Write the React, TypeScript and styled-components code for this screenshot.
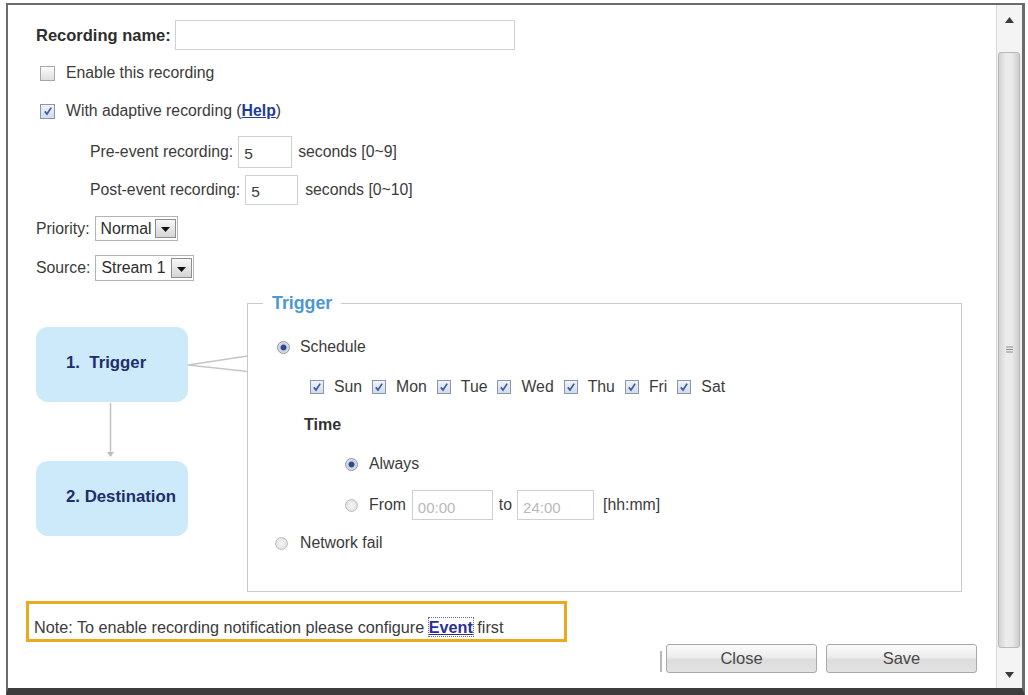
import React from "react";
import styled, { createGlobalStyle } from "styled-components";

const Global = createGlobalStyle`
  html, body { margin: 0; padding: 0; background: #fff; }
  body {
    font-family: "Liberation Sans", Arial, Helvetica, sans-serif;
    font-size: 15.8px;
    color: #3b3b3b;
  }
  * { box-sizing: border-box; }
`;

const Frame = styled.div`
  margin: 3px 0 0 6px;
  width: 1019px;
  height: 692px;
  border-style: solid;
  border-color: #6b6b6b;
  border-width: 2px 3px 7px 2px;
  border-bottom-color: #3d3d3d;
  display: flex;
  background: #fff;
  overflow: hidden;
`;

const Content = styled.div`
  flex: 1;
  padding: 15px 0 0 28px;
  display: flex;
  flex-direction: column;
`;

const Row = styled.div<{ $mt?: number; $indent?: number; $h?: number }>`
  display: flex;
  align-items: center;
  margin-top: ${(p) => p.$mt ?? 0}px;
  padding-left: ${(p) => p.$indent ?? 0}px;
  height: ${(p) => p.$h ?? 20}px;
  white-space: nowrap;
`;

const BoldLabel = styled.span`
  font-weight: bold;
  font-size: 16.5px;
  color: #2e2e2e;
  margin-right: 4px;
`;

const TextInput = styled.div<{ $w: number; $h: number; $muted?: boolean }>`
  width: ${(p) => p.$w}px;
  height: ${(p) => p.$h}px;
  border: 1px solid #d0d0d0;
  background: #fff;
  display: flex;
  align-items: center;
  padding: 4px 0 0 5px;
  color: ${(p) => (p.$muted ? "#b9b9b9" : "#3b3b3b")};
  font-size: ${(p) => (p.$muted ? "15px" : "15.5px")};
  flex: none;
`;

const Gap = styled.span<{ $w: number }>`
  display: inline-block;
  width: ${(p) => p.$w}px;
  flex: none;
`;

const CheckBox = styled.span<{ $checked?: boolean; $size?: number }>`
  display: inline-flex;
  align-items: center;
  justify-content: center;
  flex: none;
  width: ${(p) => p.$size ?? 15}px;
  height: ${(p) => p.$size ?? 15}px;
  border: 1px solid ${(p) => (p.$checked ? "#8896b0" : "#a7a7a7")};
  background: ${(p) =>
    p.$checked
      ? "linear-gradient(#f0f3f8, #d3dbe7)"
      : "linear-gradient(#fbfbfb, #dedede)"};
`;

const Check = ({ checked, size }: { checked?: boolean; size?: number }) => (
  <CheckBox $checked={checked} $size={size}>
    {checked && (
      <svg width="10" height="10" viewBox="0 0 10 10">
        <path d="M1.8 5.4 L4 8 L8.2 1.6" fill="none" stroke="#3a5ca8" strokeWidth="1.7" />
      </svg>
    )}
  </CheckBox>
);

const RadioDot = styled.span<{ $on?: boolean }>`
  display: inline-block;
  flex: none;
  width: 13px;
  height: 13px;
  border-radius: 50%;
  border: 1px solid ${(p) => (p.$on ? "#8e97a6" : "#bdbdbd")};
  background: ${(p) =>
    p.$on
      ? "radial-gradient(circle, #2c4b8c 0, #2c4b8c 2.4px, #c9d0db 3.4px, #eef0f4 100%)"
      : "radial-gradient(circle, #f6f6f6 0, #e6e6e6 60%, #d6d6d6 100%)"};
`;

const HelpLink = styled.a`
  font-weight: bold;
  color: #1d3c9c;
  text-decoration: underline;
`;

const EventLink = styled.a`
  font-weight: bold;
  color: #2b2e98;
  text-decoration: underline;
  outline: 1px dotted #6a6a8a;
  outline-offset: 0;
`;

const SelectBox = styled.div<{ $w: number; $h: number }>`
  width: ${(p) => p.$w}px;
  height: ${(p) => p.$h}px;
  border: 1px solid #b4b4b4;
  background: #fff;
  display: flex;
  align-items: center;
  justify-content: space-between;
  padding: 0 1px 0 5px;
  color: #2e2e2e;
  flex: none;
`;

const DropBtn = styled.span`
  width: 21px;
  height: calc(100% - 4px);
  border: 1px solid #8e8e8e;
  background: linear-gradient(#f7f7f7, #d5d5d5);
  display: flex;
  align-items: center;
  justify-content: center;
  padding-top: 2px;
`;

const Select = ({ value, w, h }: { value: string; w: number; h: number }) => (
  <SelectBox $w={w} $h={h}>
    <span>{value}</span>
    <DropBtn>
      <svg width="9" height="5" viewBox="0 0 9 5">
        <path d="M0 0 H9 L4.5 5 Z" fill="#111" />
      </svg>
    </DropBtn>
  </SelectBox>
);

const TriggerArea = styled.div`
  position: relative;
  display: flex;
  align-items: flex-start;
  margin-top: 22px;
`;

const Diagram = styled.div`
  width: 152px;
  margin-top: 24px;
  margin-right: 59px;
  display: flex;
  flex-direction: column;
`;

const Step = styled.div`
  height: 75px;
  border-radius: 12px;
  background: #cdeafa;
  display: flex;
  align-items: center;
  padding: 0 0 3px 30px;
  font-weight: bold;
  font-size: 16.8px;
  color: #1f2d6c;
  white-space: pre;
`;

const ArrowDown = styled.svg`
  display: block;
  width: 152px;
  height: 59px;
`;

const Connector = styled.svg`
  position: absolute;
  left: 150px;
  top: 50px;
  width: 66px;
  height: 24px;
`;

const Fieldset = styled.div`
  position: relative;
  width: 715px;
  height: 289px;
  border: 1px solid #cacaca;
  padding-top: 33px;
`;

const Legend = styled.span`
  position: absolute;
  left: 15px;
  top: -12px;
  padding: 0 9px;
  background: #fff;
  line-height: 22px;
  font-size: 17.8px;
  font-weight: bold;
  color: #4b98d4;
`;

const Days = styled.div`
  display: flex;
  align-items: center;
  gap: 10px;
`;

const Day = styled.span`
  display: inline-flex;
  align-items: center;
  gap: 10px;
`;

const TimeLabel = styled.span`
  font-weight: bold;
  font-size: 16px;
  color: #333;
`;

const Note = styled.div`
  margin: 9px 0 0 -10px;
  width: 541px;
  height: 41px;
  border: 3px solid #e9aa1f;
  padding: 14px 0 0 5px;
  line-height: 18px;
  font-size: 16.2px;
  white-space: nowrap;
`;

const ButtonBar = styled.div`
  margin-top: 2px;
  padding-right: 19px;
  display: flex;
  justify-content: flex-end;
  align-items: flex-end;
`;

const Separator = styled.span`
  width: 2px;
  height: 21px;
  background: #b8b8b8;
  margin-right: 4px;
  margin-bottom: 1px;
`;

const Button = styled.button<{ $ml?: number }>`
  width: 151px;
  height: 29px;
  margin-left: ${(p) => p.$ml ?? 0}px;
  border: 1px solid #a9a9a9;
  border-radius: 3px;
  background: linear-gradient(#fcfcfc, #ececec 45%, #dcdcdc 55%, #e2e2e2);
  font-family: inherit;
  font-size: 16.5px;
  color: #484848;
  padding: 0;
`;

const Scrollbar = styled.div`
  width: 26px;
  flex: none;
  display: flex;
  flex-direction: column;
  background: #efefef;
  border-left: 1px solid #dadada;
`;

const ScrollBtn = styled.div<{ $h: number; $pt: number }>`
  height: ${(p) => p.$h}px;
  display: flex;
  justify-content: center;
  align-items: flex-start;
  padding-top: ${(p) => p.$pt}px;
  background: #f4f4f4;
`;

const Thumb = styled.div`
  flex: 1;
  margin: 0 2px 0 1px;
  border: 1px solid #b8b8b8;
  border-radius: 3px;
  background: linear-gradient(90deg, #d3d3d3, #ececec 35%, #e9e9e9 65%, #cdcdcd);
  display: flex;
  align-items: center;
  justify-content: center;
`;

const days = ["Sun", "Mon", "Tue", "Wed", "Thu", "Fri", "Sat"];

export default function App() {
  return (
    <>
      <Global />
      <Frame>
        <Content>
          <Row $h={30}>
            <BoldLabel>Recording name:</BoldLabel>
            <TextInput $w={340} $h={30} />
          </Row>
          <Row $mt={13} $indent={4}>
            <Check />
            <Gap $w={11} />
            Enable this recording
          </Row>
          <Row $mt={18} $indent={4}>
            <Check checked />
            <Gap $w={11} />
            With adaptive recording (<HelpLink>Help</HelpLink>)
          </Row>
          <Row $mt={15} $indent={54} $h={32}>
            Pre-event recording:
            <Gap $w={5} />
            <TextInput $w={54} $h={32}>5</TextInput>
            <Gap $w={6} />
            seconds [0~9]
          </Row>
          <Row $mt={7} $indent={54} $h={30}>
            Post-event recording:
            <Gap $w={5} />
            <TextInput $w={53} $h={30}>5</TextInput>
            <Gap $w={7} />
            seconds [0~10]
          </Row>
          <Row $mt={11} $h={25}>
            Priority:
            <Gap $w={5} />
            <Select value="Normal" w={83} h={25} />
          </Row>
          <Row $mt={14} $h={26}>
            Source:
            <Gap $w={5} />
            <Select value="Stream 1" w={99} h={26} />
          </Row>

          <TriggerArea>
            <Diagram>
              <Step>{"1.  Trigger"}</Step>
              <ArrowDown viewBox="0 0 152 59">
                <line x1="74.5" y1="1" x2="74.5" y2="54" stroke="#c2c2c2" strokeWidth="1.5" />
                <path d="M71 50 L78 50 L74.5 55 Z" fill="#bdbdbd" />
              </ArrowDown>
              <Step>{"2. Destination"}</Step>
            </Diagram>
            <Connector viewBox="0 0 66 24">
              <rect x="60" y="3.5" width="4" height="14.5" fill="#fff" />
              <path d="M61.5 3 L2 12 L61.5 18.5" fill="none" stroke="#c6c6c6" strokeWidth="1.3" />
            </Connector>
            <Fieldset>
              <Legend>Trigger</Legend>
              <Row $indent={29}>
                <RadioDot $on />
                <Gap $w={10} />
                Schedule
              </Row>
              <Row $mt={20} $indent={62}>
                <Days>
                  {days.map((d) => (
                    <Day key={d}>
                      <Check checked size={14} />
                      {d}
                    </Day>
                  ))}
                </Days>
              </Row>
              <Row $mt={18} $indent={56}>
                <TimeLabel>Time</TimeLabel>
              </Row>
              <Row $mt={19} $indent={97}>
                <RadioDot $on />
                <Gap $w={11} />
                Always
              </Row>
              <Row $mt={16} $indent={97} $h={30}>
                <RadioDot />
                <Gap $w={11} />
                From
                <Gap $w={6} />
                <TextInput $w={81} $h={30} $muted>00:00</TextInput>
                <Gap $w={6} />
                to
                <Gap $w={5} />
                <TextInput $w={77} $h={30} $muted>24:00</TextInput>
                <Gap $w={9} />
                [hh:mm]
              </Row>
              <Row $mt={13} $indent={27}>
                <RadioDot />
                <Gap $w={12} />
                Network fail
              </Row>
            </Fieldset>
          </TriggerArea>

          <Note>
            Note: To enable recording notification please configure <EventLink>Event</EventLink> first
          </Note>
          <ButtonBar>
            <Separator />
            <Button>Close</Button>
            <Button $ml={9}>Save</Button>
          </ButtonBar>
        </Content>
        <Scrollbar>
          <ScrollBtn $h={47} $pt={12}>
            <svg width="9" height="6" viewBox="0 0 9 6">
              <path d="M0 6 L4.5 0 L9 6 Z" fill="#3a3a3a" />
            </svg>
          </ScrollBtn>
          <Thumb>
            <svg width="9" height="8" viewBox="0 0 9 8">
              <path d="M1 1 H8 M1 3.5 H8 M1 6 H8" stroke="#8a8a8a" strokeWidth="1" />
            </svg>
          </Thumb>
          <ScrollBtn $h={40} $pt={24}>
            <svg width="9" height="6" viewBox="0 0 9 6">
              <path d="M0 0 L9 0 L4.5 6 Z" fill="#3a3a3a" />
            </svg>
          </ScrollBtn>
        </Scrollbar>
      </Frame>
    </>
  );
}
